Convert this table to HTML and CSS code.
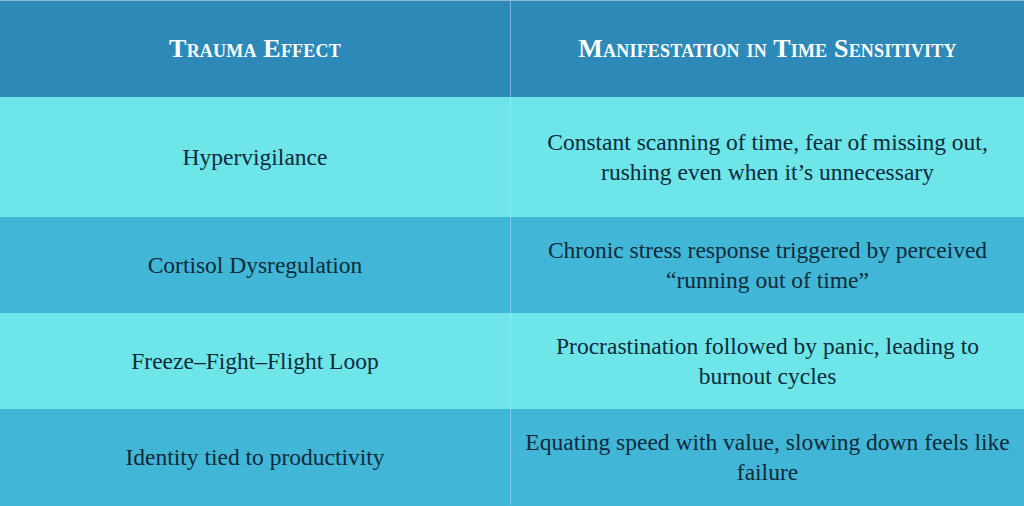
FILE: index.html
```html
<!DOCTYPE html>
<html>
<head>
<meta charset="utf-8">
<link rel="stylesheet" href="styles.css">
</head>
<body>
<div class="table">
  <div class="row head">
    <div class="cell">Trauma Effect</div>
    <div class="cell">Manifestation in Time Sensitivity</div>
  </div>
  <div class="row light tall">
    <div class="cell">Hypervigilance</div>
    <div class="cell">Constant scanning of time, fear of missing out, rushing even when it’s unnecessary</div>
  </div>
  <div class="row dark">
    <div class="cell">Cortisol Dysregulation</div>
    <div class="cell">Chronic stress response triggered by perceived “running out of time”</div>
  </div>
  <div class="row light">
    <div class="cell">Freeze–Fight–Flight Loop</div>
    <div class="cell">Procrastination followed by panic, leading to burnout cycles</div>
  </div>
  <div class="row dark last">
    <div class="cell">Identity tied to productivity</div>
    <div class="cell">Equating speed with value, slowing down feels like failure</div>
  </div>
</div>
</body>
</html>
```
FILE: styles.css
```css
html, body {
  margin: 0;
  padding: 0;
  background: #42b6d6;
}
.table {
  width: 1024px;
  height: 506px;
  display: flex;
  flex-direction: column;
  border-top: 1px solid #8fb8dc;
  box-sizing: border-box;
  font-family: "Liberation Serif", "DejaVu Serif", serif;
  color: #0e2b3a;
}
.row {
  display: grid;
  grid-template-columns: 510px 1fr;
  height: 96px;
}
.row.head { height: 96px; background: #2d8ab8; }
.row.tall { height: 120px; }
.row.light { background: #6de5e9; }
.row.dark { background: #42b6d6; }
.cell {
  display: flex;
  align-items: center;
  justify-content: center;
  text-align: center;
  font-size: 23.5px;
  line-height: 30px;
  padding: 0 12px;
}
.cell + .cell {
  border-left: 1px solid #9ad6e6;
}
.head .cell {
  color: #ffffff;
  font-weight: bold;
  font-variant: small-caps;
  font-size: 26px;
  letter-spacing: 0.2px;
}
.head .cell + .cell { border-left-color: #7fb4d6; }
.light .cell + .cell { border-left-color: #8fe9ee; }
.dark .cell + .cell { border-left-color: #7fd0e4; }
```
